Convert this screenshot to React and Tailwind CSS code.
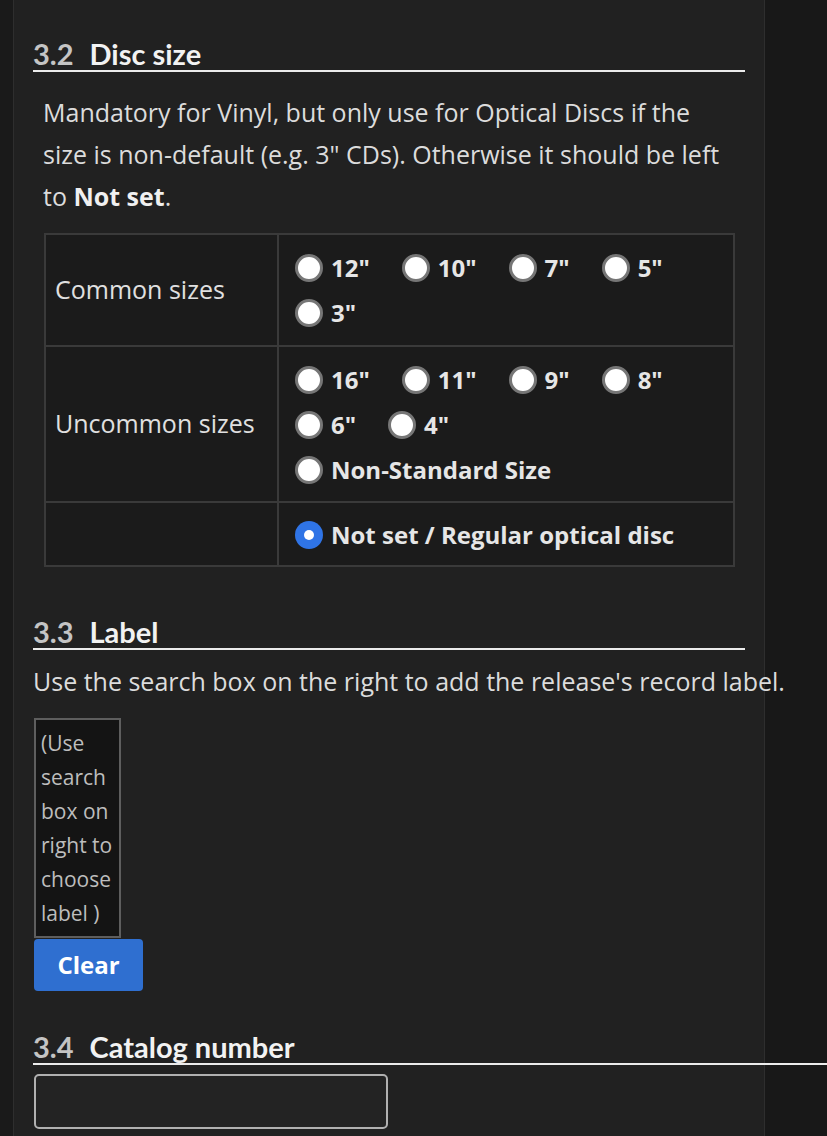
import React from "react";

const COMMON = ['12"', '10"', '7"', '5"', '3"'];
const UNCOMMON = ['16"', '11"', '9"', '8"', '6"', '4"', "Non-Standard Size"];

function Radio({ label, checked }) {
  return (
    <label className="inline-flex items-center h-[45px] mr-[32px] align-top">
      {checked ? (
        <span className="w-[28px] h-[28px] rounded-full bg-[#2f74e6] flex items-center justify-center">
          <span className="w-[10px] h-[10px] rounded-full bg-white" />
        </span>
      ) : (
        <span className="w-[28px] h-[28px] rounded-full bg-white border-[3px] border-[#767676]" />
      )}
      <span className="ml-[8px] text-[24px] font-bold text-[#e6e6e6]">{label}</span>
    </label>
  );
}

function Heading({ num, title, wide }) {
  return (
    <div
      className={
        "h-[34px] leading-[32px] border-b-2 border-[#ececec] text-[29px] font-bold font-['Lato'] " +
        (wide ? "w-[820px]" : "w-full")
      }
    >
      <span className="text-[#c4c4c4] mr-[16px]">{num}</span>
      <span className="text-[#f2f2f2]">{title}</span>
    </div>
  );
}

export default function App() {
  return (
    <div
      className="min-h-[1136px] flex bg-[#181818] overflow-hidden"
      style={{ fontFamily: "'Open Sans', Lato, sans-serif" }}
    >
      <div className="w-[13px] shrink-0 bg-[#1a1a1a]" />
      <div className="w-[752px] shrink-0 bg-[#212121] border-x border-[#2e2e2e] pl-[19px] pr-[19px] pt-[38px]">
        {/* ================= 3.2 Disc size ================= */}
        <Heading num="3.2" title="Disc size" />
        <p className="mt-[19px] ml-[10px] w-[684px] text-[25px] leading-[42px] text-[#dcdcdc]">
          Mandatory for Vinyl, but only use for Optical Discs if the size is
          non-default (e.g. 3" CDs). Otherwise it should be left to{" "}
          <b className="text-[#f0f0f0]">Not set</b>.
        </p>

        <table className="mt-[16px] ml-[11px] w-[691px] border-collapse border-2 border-[#3a3a3a] bg-[#1b1b1b]">
          <tbody>
            <tr className="border-b-2 border-[#3a3a3a]">
              <td className="w-[233px] border-r-2 border-[#3a3a3a] pl-[9px] text-[25px] text-[#e0e0e0]">
                Common sizes
              </td>
              <td className="pl-[16px] pr-[8px] pt-[10px] pb-[10px]">
                {COMMON.map((s) => (
                  <Radio key={s} label={s} />
                ))}
              </td>
            </tr>
            <tr className="border-b-2 border-[#3a3a3a]">
              <td className="border-r-2 border-[#3a3a3a] pl-[9px] text-[25px] text-[#e0e0e0]">
                Uncommon sizes
              </td>
              <td className="pl-[16px] pr-[8px] pt-[10px] pb-[9px]">
                {UNCOMMON.map((s) => (
                  <Radio key={s} label={s} />
                ))}
              </td>
            </tr>
            <tr>
              <td className="border-r-2 border-[#3a3a3a]" />
              <td className="pl-[16px] pr-[8px] pt-[9px] pb-[8px]">
                <Radio label="Not set / Regular optical disc" checked />
              </td>
            </tr>
          </tbody>
        </table>

        {/* ================= 3.3 Label ================= */}
        <div className="mt-[49px]">
          <Heading num="3.3" title="Label" />
        </div>
        <p className="mt-[10px] text-[25px] leading-[42px] text-[#dcdcdc] whitespace-nowrap">
          Use the search box on the right to add the release's record label.
        </p>
        <div className="mt-[16px] ml-[1px] w-[87px] border-2 border-[#5e5e5e] bg-[#141414] px-[5px] py-[6px] text-[21px] leading-[34px] text-[#bdbdbd] whitespace-nowrap">
          (Use
          <br />
          search
          <br />
          box on
          <br />
          right to
          <br />
          choose
          <br />
          label )
        </div>
        <button className="mt-[1px] ml-[1px] w-[109px] h-[52px] rounded-[4px] bg-[#2f6fd0] text-[24px] font-bold text-white">
          Clear
        </button>

        {/* ================= 3.4 Catalog number ================= */}
        <div className="mt-[40px]">
          <Heading num="3.4" title="Catalog number" wide />
        </div>
        <input
          type="text"
          className="block mt-[9px] ml-[1px] w-[354px] h-[55px] rounded-[5px] border-2 border-[#b0b0b0] bg-[#232323] outline-none"
        />
      </div>
      <div className="flex-1" />
    </div>
  );
}
